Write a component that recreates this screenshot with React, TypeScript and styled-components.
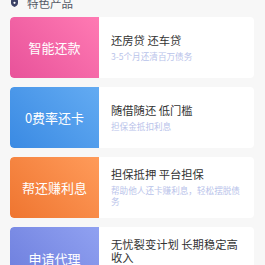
import React from "react";
import styled, { createGlobalStyle } from "styled-components";

const Global = createGlobalStyle`
  html, body { margin: 0; padding: 0; background: #f7f7f7; }
  body { font-family: "Noto Sans CJK SC", "Noto Sans", sans-serif; }
`;

const Page = styled.div`
  width: 265px;
  box-sizing: border-box;
  padding: 0 11px 0 10px;
  display: flex;
  flex-direction: column;
  gap: 9px;
  margin-top: -7px;
`;

const Header = styled.div`
  display: flex;
  align-items: center;
  gap: 9px;
  height: 20px;
  padding-left: 1px;
  margin-bottom: -5px;
`;

const HeaderTitle = styled.span`
  font-size: 11.5px;
  line-height: 14px;
  color: #555a66;
`;

const Card = styled.div`
  display: flex;
  min-height: 61px;
  background: #fff;
  border-radius: 4px;
  overflow: hidden;
`;

const Badge = styled.div<{ $from: string; $to: string }>`
  flex: 0 0 89px;
  display: flex;
  align-items: center;
  justify-content: center;
  background: linear-gradient(45deg, ${(p) => p.$from}, ${(p) => p.$to});
  color: #fff;
  font-size: 13px;
  border-radius: 4px 0 0 4px;
`;

const Body = styled.div`
  flex: 1;
  display: flex;
  flex-direction: column;
  justify-content: center;
  padding: 11px 10px 11px 12px;
`;

const Title = styled.div`
  font-size: 11.3px;
  line-height: 13px;
  color: #333;
`;

const Sub = styled.div`
  margin-top: 4px;
  font-size: 8.6px;
  line-height: 11px;
  color: #b9c3ea;
`;

const items = [
  { label: "智能还款", title: "还房贷 还车贷", sub: "3-5个月还清百万债务", from: "#e8529a", to: "#ff7ab3" },
  { label: "0费率还卡", title: "随借随还 低门槛", sub: "担保金抵扣利息", from: "#3a8ae3", to: "#63abf2" },
  { label: "帮还赚利息", title: "担保抵押 平台担保", sub: "帮助他人还卡赚利息，轻松摆脱债务", from: "#ef7530", to: "#ff9b5a" },
  { label: "申请代理", title: "无忧裂变计划 长期稳定高收入", sub: "邀请好友共享收益", from: "#6b7cdc", to: "#90a1f1" },
];

const Shield = () => (
  <svg width="7" height="8" viewBox="0 0 7 8">
    <path d="M3.5 0 L7 1.2 V4 C7 6 5.4 7.3 3.5 8 C1.6 7.3 0 6 0 4 V1.2 Z" fill="#3b4266" />
    <circle cx="3.5" cy="3.8" r="1.1" fill="#fff" />
  </svg>
);

export default function App() {
  return (
    <>
      <Global />
      <Page>
        <Header>
          <Shield />
          <HeaderTitle>特色产品</HeaderTitle>
        </Header>
        {items.map((it) => (
          <Card key={it.label}>
            <Badge $from={it.from} $to={it.to}>{it.label}</Badge>
            <Body>
              <Title>{it.title}</Title>
              <Sub>{it.sub}</Sub>
            </Body>
          </Card>
        ))}
      </Page>
    </>
  );
}
